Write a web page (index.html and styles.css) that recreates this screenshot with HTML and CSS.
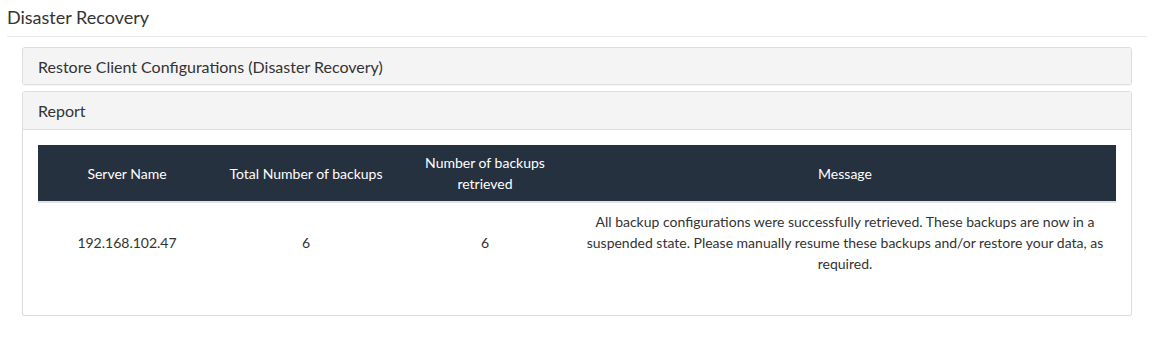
FILE: index.html
```html
<!doctype html>
<html lang="en">
<head>
  <meta charset="UTF-8">
  <meta name="viewport" content="width=device-width, initial-scale=1.0">
  <title>Disaster Recovery</title>
  <link rel="stylesheet" href="styles.css">
</head>
<body>
  <div class="page">
    <h1 class="page-title">Disaster Recovery</h1>
    <div class="panels">
      <div class="panel">
        <div class="panel-heading">Restore Client Configurations (Disaster Recovery)</div>
      </div>
      <div class="panel">
        <div class="panel-heading with-body">Report</div>
        <div class="panel-body">
          <table class="report">
            <colgroup>
              <col class="col-server">
              <col class="col-total">
              <col class="col-retrieved">
              <col>
            </colgroup>
            <thead>
              <tr>
                <th>Server Name</th>
                <th>Total Number of backups</th>
                <th>Number of backups retrieved</th>
                <th>Message</th>
              </tr>
            </thead>
            <tbody>
              <tr>
                <td>192.168.102.47</td>
                <td>6</td>
                <td>6</td>
                <td>All backup configurations were successfully retrieved. These backups are now in a suspended state. Please manually resume these backups and/or restore your data, as required.</td>
              </tr>
            </tbody>
          </table>
        </div>
      </div>
    </div>
  </div>
</body>
</html>
```

FILE: styles.css
```css
:root {
  --text: #333333;
  --border: #dddddd;
  --heading-bg: #f4f4f4;
  --table-head: #263140;
}

* {
  box-sizing: border-box;
  margin: 0;
  padding: 0;
}

body {
  font-family: Lato, "Open Sans", sans-serif;
  color: var(--text);
  background: #ffffff;
}

.page {
  padding: 0 10px 0 7px;
}

.page-title {
  font-size: 18px;
  font-weight: 400;
  line-height: 22px;
  padding: 6px 0 8px;
  border-bottom: 1px solid #e8e8e8;
}

.panels {
  margin: 10px 15px 0;
  display: flex;
  flex-direction: column;
  gap: 6px;
}

.panel {
  border: 1px solid var(--border);
  border-radius: 3px;
  background: #ffffff;
  box-shadow: 0 1px 1px rgba(0, 0, 0, 0.04);
}

.panel-heading {
  background: var(--heading-bg);
  height: 36px;
  padding: 0 15px;
  display: flex;
  align-items: center;
  font-size: 16px;
  border-radius: 3px;
}

.panel-heading.with-body {
  height: 38px;
  border-bottom: 1px solid var(--border);
  border-radius: 3px 3px 0 0;
}

.panel-body {
  padding: 15px 15px 33px;
}

.report {
  width: 100%;
  border-collapse: collapse;
  table-layout: fixed;
  font-size: 14px;
  line-height: 21px;
  text-align: center;
}

.col-server {
  width: 178px;
}

.col-total {
  width: 180px;
}

.col-retrieved {
  width: 178px;
}

.report th {
  background: var(--table-head);
  color: #ffffff;
  font-weight: 400;
  height: 56px;
  padding: 7px 8px;
  border-bottom: 2px solid #dfe2e6;
  vertical-align: middle;
}

.report td {
  padding: 8px 8px;
  vertical-align: middle;
}
```
